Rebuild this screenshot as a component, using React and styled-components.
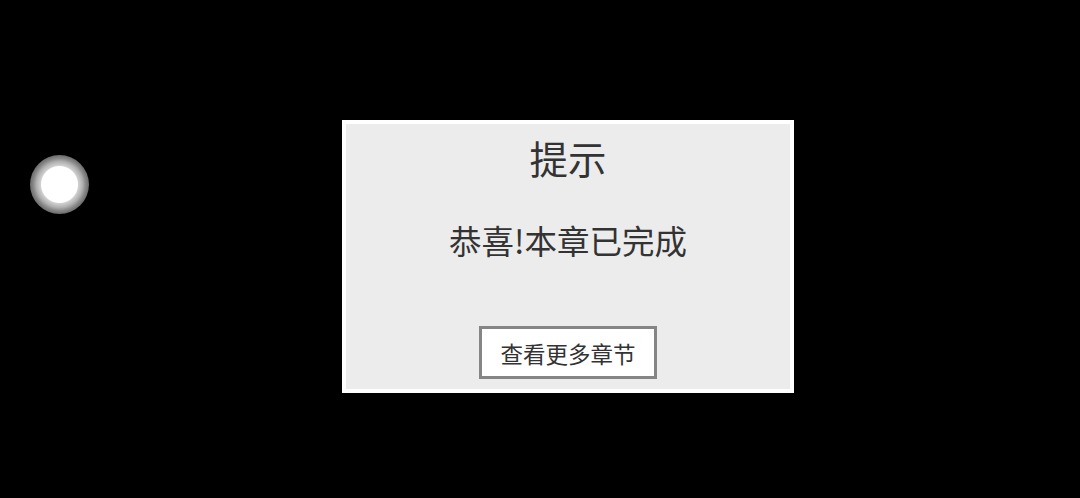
import React from "react";
import styled, { createGlobalStyle } from "styled-components";

const GlobalStyle = createGlobalStyle`
  html, body {
    margin: 0;
    padding: 0;
    background: #000;
  }
  body {
    font-family: "Noto Sans CJK SC", "Noto Sans", sans-serif;
  }
`;

const Screen = styled.div`
  position: relative;
  width: 1080px;
  height: 498px;
  background: #000;
  display: flex;
  align-items: flex-start;
  padding: 120px 0 0 342px;
  box-sizing: border-box;
`;

const FloatingBall = styled.div`
  position: absolute;
  left: 30px;
  top: 155px;
  width: 59px;
  height: 59px;
  border-radius: 50%;
  background: radial-gradient(
    circle,
    #ffffff 0,
    #ffffff 18px,
    #d0d0d0 19px,
    #b0b0b0 23px,
    #8a8a8a 26px,
    #6a6a6a 29.5px
  );
`;

const Dialog = styled.div`
  width: 452px;
  height: 273px;
  box-sizing: border-box;
  border: 4px solid #fff;
  background: #ececec;
  display: flex;
  flex-direction: column;
  align-items: center;
  padding: 11px 0 10px;
  color: #333;
`;

const Title = styled.div`
  font-size: 38.5px;
  line-height: 44px;
`;

const Message = styled.div`
  margin-top: 41px;
  font-size: 32.5px;
  line-height: 40px;
`;

const ActionButton = styled.button`
  margin-top: auto;
  width: 178px;
  height: 53px;
  box-sizing: border-box;
  border: 3.5px solid #858585;
  background: #fff;
  color: #333;
  font-family: inherit;
  font-size: 22.5px;
  padding: 0;
  cursor: pointer;
`;

export default function App() {
  return (
    <>
      <GlobalStyle />
      <Screen>
        <FloatingBall />
        <Dialog>
          <Title>提示</Title>
          <Message>恭喜!本章已完成</Message>
          <ActionButton>查看更多章节</ActionButton>
        </Dialog>
      </Screen>
    </>
  );
}
